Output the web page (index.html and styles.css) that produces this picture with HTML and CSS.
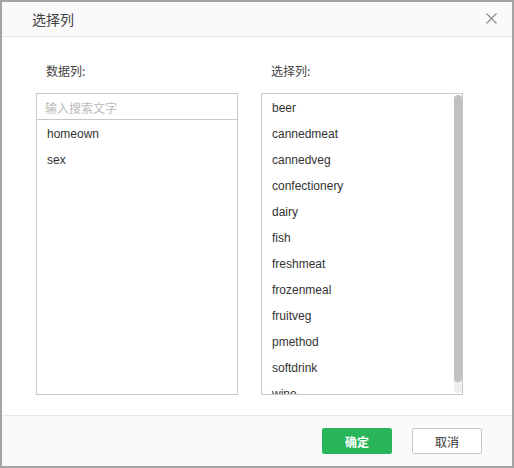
FILE: index.html
```html
<!DOCTYPE html>
<html>
<head>
<meta charset="utf-8">
<link rel="stylesheet" href="styles.css">
</head>
<body>
<div class="dialog">
  <div class="header">
    <span class="title">选择列</span>
    <svg class="close" width="11" height="11" viewBox="0 0 11 11"><path d="M0.5 0.5L10.5 10.5M10.5 0.5L0.5 10.5" stroke="#8c8c8c" stroke-width="1.1" fill="none"/></svg>
  </div>
  <div class="body">
    <div class="col">
      <div class="label">数据列:</div>
      <div class="box">
        <div class="search">输入搜索文字</div>
        <div class="items">
          <div class="item">homeown</div>
          <div class="item">sex</div>
        </div>
      </div>
    </div>
    <div class="col">
      <div class="label">选择列:</div>
      <div class="box scrollbox">
        <div class="list">
          <div class="item">beer</div>
          <div class="item">cannedmeat</div>
          <div class="item">cannedveg</div>
          <div class="item">confectionery</div>
          <div class="item">dairy</div>
          <div class="item">fish</div>
          <div class="item">freshmeat</div>
          <div class="item">frozenmeal</div>
          <div class="item">fruitveg</div>
          <div class="item">pmethod</div>
          <div class="item">softdrink</div>
          <div class="item">wine</div>
        </div>
        <div class="track"><div class="thumb"></div></div>
      </div>
    </div>
  </div>
  <div class="footer">
    <button class="btn ok">确定</button>
    <button class="btn cancel">取消</button>
  </div>
</div>
</body>
</html>
```
FILE: styles.css
```css
html, body {
  margin: 0;
  padding: 0;
}
body {
  width: 514px;
  height: 468px;
  font-family: "Liberation Sans", "Noto Sans CJK SC", sans-serif;
  color: #333;
}
.dialog {
  box-sizing: border-box;
  width: 514px;
  height: 468px;
  border: 2px solid #a4a4a4;
  background: #fff;
  display: flex;
  flex-direction: column;
}
.header {
  height: 34px;
  background: #fafafa;
  border-bottom: 1px solid #e8e8e8;
  display: flex;
  align-items: center;
  justify-content: space-between;
  padding: 0 15px 0 30px;
}
.title {
  font-size: 14px;
  color: #444;
  font-family: "Noto Sans CJK SC", sans-serif;
}
.close {
  display: block;
  margin-top: -1px;
}
.body {
  flex: 1;
  display: flex;
  gap: 23px;
  padding: 0 0 0 34px;
}
.col {
  width: 202px;
  display: flex;
  flex-direction: column;
}
.label {
  font-size: 12px;
  font-family: "Noto Sans CJK SC", sans-serif;
  color: #444;
  height: 18px;
  line-height: 18px;
  padding: 25px 0 0 10px;
  margin-bottom: 13px;
}
.box {
  box-sizing: border-box;
  height: 302px;
  border: 1px solid #c8c8c8;
}
.search {
  height: 25px;
  line-height: 27px;
  border-bottom: 1px solid #c8c8c8;
  padding-left: 8px;
  font-size: 12px;
  color: #bbb;
  font-family: "Noto Sans CJK SC", sans-serif;
}
.items {
  padding-top: 1px;
}
.item {
  height: 26px;
  line-height: 26px;
  font-size: 12px;
  padding-left: 10px;
  color: #333;
  white-space: nowrap;
}
.scrollbox {
  display: flex;
}
.list {
  flex: 1;
  overflow: hidden;
  padding-top: 1px;
}
.track {
  width: 8px;
  margin: 1px 0 1px 0;
  background: #eeeeee;
  border-radius: 4px;
}
.thumb {
  height: 287px;
  background: #c1c1c1;
  border-radius: 4px;
}
.footer {
  height: 50px;
  background: #fafafa;
  border-top: 1px solid #e8e8e8;
  display: flex;
  align-items: center;
  justify-content: flex-end;
  gap: 20px;
  padding-right: 30px;
}
.btn {
  box-sizing: border-box;
  width: 70px;
  height: 26px;
  border-radius: 2px;
  font-size: 12px;
  font-family: "Noto Sans CJK SC", sans-serif;
  padding: 0;
  cursor: pointer;
}
.ok {
  background: #2bb55a;
  border: 1px solid #2bb55a;
  color: #fff;
  font-weight: bold;
}
.cancel {
  background: #fff;
  border: 1px solid #c8c8c8;
  color: #333;
}
```
